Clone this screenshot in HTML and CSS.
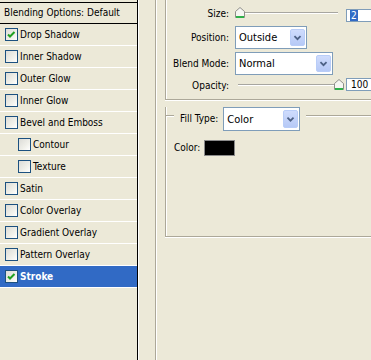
FILE: index.html
```html
<!DOCTYPE html>
<html>
<head>
<meta charset="utf-8">
<link rel="stylesheet" href="styles.css">
</head>
<body>
<div class="dialog">
  <div class="list">
    <div class="list-head">Blending Options: Default</div>
    <div class="item"><span class="cb"><svg width="11" height="11" viewBox="0 0 11 11"><path d="M2 5.5l2 2 4.5-4.5" stroke="#21a121" stroke-width="2" fill="none"/></svg></span><span>Drop Shadow</span></div>
    <div class="item"><span class="cb"></span><span>Inner Shadow</span></div>
    <div class="item"><span class="cb"></span><span>Outer Glow</span></div>
    <div class="item"><span class="cb"></span><span>Inner Glow</span></div>
    <div class="item"><span class="cb"></span><span>Bevel and Emboss</span></div>
    <div class="item sub"><span class="cb"></span><span>Contour</span></div>
    <div class="item sub"><span class="cb"></span><span>Texture</span></div>
    <div class="item"><span class="cb"></span><span>Satin</span></div>
    <div class="item"><span class="cb"></span><span>Color Overlay</span></div>
    <div class="item"><span class="cb"></span><span>Gradient Overlay</span></div>
    <div class="item"><span class="cb"></span><span>Pattern Overlay</span></div>
    <div class="item selected"><span class="cb"><svg width="11" height="11" viewBox="0 0 11 11"><path d="M2 5.5l2 2 4.5-4.5" stroke="#21a121" stroke-width="2" fill="none"/></svg></span><span>Stroke</span></div>
  </div>
  <div class="pane">
    <div class="frame">
      <div class="group structure">
        <div class="label">Size:</div>
        <div class="ctrl">
          <div class="slider s-size">
            <svg class="thumb" width="10" height="11" viewBox="0 0 10 11"><path d="M0.5 10.5V4.5L5 0.5L9.5 4.5V10.5Z" fill="#f6f6f2" stroke="#8f8f8a"/><path d="M1 9.5H9M1 10.5H9" stroke="#2fb04a"/></svg>
            <div class="track"></div>
          </div>
          <div class="num num-size"><span class="sel">2</span></div>
        </div>
        <div class="label">Position:</div>
        <div class="ctrl">
          <div class="select w-pos"><span class="val">Outside</span><span class="btn"><svg width="15" height="17" viewBox="0 0 15 17"><path d="M4 7l3.5 3.5L11 7" stroke="#4d6185" stroke-width="2" fill="none"/></svg></span></div>
        </div>
        <div class="label">Blend Mode:</div>
        <div class="ctrl">
          <div class="select w-blend"><span class="val">Normal</span><span class="btn"><svg width="15" height="17" viewBox="0 0 15 17"><path d="M4 7l3.5 3.5L11 7" stroke="#4d6185" stroke-width="2" fill="none"/></svg></span></div>
        </div>
        <div class="label">Opacity:</div>
        <div class="ctrl">
          <div class="slider s-opacity">
            <div class="track"></div>
            <svg class="thumb" width="10" height="11" viewBox="0 0 10 11"><path d="M0.5 10.5V4.5L5 0.5L9.5 4.5V10.5Z" fill="#f6f6f2" stroke="#8f8f8a"/><path d="M1 9.5H9M1 10.5H9" stroke="#2fb04a"/></svg>
          </div>
          <div class="num num-op">100</div>
        </div>
      </div>
      <div class="group fill">
        <div class="legend-row">
          <div class="seg seg-l"></div>
          <div class="legend">
            <span class="legend-label">Fill Type:</span>
            <div class="select w-fill"><span class="val">Color</span><span class="btn"><svg width="15" height="18" viewBox="0 0 15 18"><path d="M4 7.5l3.5 3.5L11 7.5" stroke="#4d6185" stroke-width="2" fill="none"/></svg></span></div>
          </div>
          <div class="seg seg-r"></div>
        </div>
        <div class="color-row">
          <span>Color:</span>
          <span class="swatch"></span>
        </div>
      </div>
    </div>
  </div>
</div>
</body>
</html>
```
FILE: styles.css
```css
* { box-sizing: border-box; }
html, body {
  margin: 0;
  padding: 0;
}
body {
  width: 371px;
  height: 360px;
  overflow: hidden;
  background: #ece9d8;
  color: #000;
  font-family: "DejaVu Sans Condensed", "DejaVu Sans", sans-serif;
  font-stretch: condensed;
  font-size: 10px;
  line-height: 1;
}
.dialog {
  display: flex;
  height: 360px;
  width: 371px;
}
.list {
  flex: none;
  width: 138px;
  padding-top: 2px;
  border-right: 1px solid #000;
  box-shadow: 1px 0 0 #fff;
}
.list-head {
  height: 22px;
  border-top: 1px solid #000;
  border-bottom: 1px solid #000;
  padding-left: 4px;
  display: flex;
  align-items: center;
}
.item {
  height: 22px;
  border-bottom: 1px solid #fff;
  display: flex;
  align-items: center;
  padding-left: 5px;
  gap: 2px;
}
.item.sub { padding-left: 18px; }
.item.selected {
  background: #316ac5;
  color: #fff;
  font-weight: bold;
}
.cb {
  flex: none;
  width: 13px;
  height: 13px;
  border: 1px solid #1c5180;
  background: linear-gradient(135deg, #dcdcd7 0%, #f0f0ea 60%, #ffffff 100%);
  display: flex;
}
.cb svg { display: block; }
.pane {
  flex: 1;
  padding-left: 17px;
  min-width: 0;
  overflow: hidden;
}
.frame {
  height: 360px;
  border-left: 1px solid #aca899;
  box-shadow: inset 1px 0 0 #fff;
  padding-left: 9px;
}
.group {
  border-left: 1px solid #aca899;
  border-bottom: 1px solid #aca899;
  box-shadow: inset 1px 0 0 #fff, 0 1px 0 #fff;
}
.structure {
  height: 100px;
  display: grid;
  grid-template-columns: 62px auto;
  grid-template-rows: 18px 23px 23px 16px;
  column-gap: 6px;
  row-gap: 3px;
  padding-top: 5px;
  padding-left: 1px;
  align-content: start;
}
.label {
  text-align: right;
  align-self: center;
  white-space: nowrap;
}
.ctrl {
  display: flex;
  align-items: flex-start;
  min-width: 0;
}
.slider {
  flex: none;
  width: 109px;
  display: flex;
  align-items: center;
}
.s-size { margin-top: 2px; }
.s-opacity { margin-top: 1px; }
.thumb { display: block; flex: none; }
.track {
  flex: 1;
  height: 2px;
  border-top: 1px solid #a7a6a0;
  border-bottom: 1px solid #fff;
  margin-top: 1px;
}
.s-size .track { margin-right: 6px; }
.s-opacity .track { margin-left: 3px; }
.num {
  flex: none;
  margin-left: 2px;
  width: 26px;
  height: 13px;
  border: 1px solid #7f9db9;
  border-right: 0;
  background: #fff;
  padding-left: 4px;
  display: flex;
  align-items: center;
}
.num-size { margin-top: 4px; }
.sel {
  background: #316ac5;
  color: #fff;
  padding: 0 1px;
  margin-left: -1px;
  line-height: 11px;
}
.select {
  flex: none;
  display: flex;
  height: 23px;
  border: 1px solid #7f9db9;
  background: #fff;
  padding: 2px 1px 2px 2px;
}
.w-pos { width: 72px; }
.w-blend { width: 98px; }
.w-fill { width: 77px; height: 24px; }
.select .val {
  flex: 1;
  display: flex;
  align-items: center;
  padding-left: 1px;
  font-size: 11px;
}
.select .btn {
  flex: none;
  width: 15px;
  border-radius: 2px;
  border: 1px solid #b9cdf8;
  background: linear-gradient(#cfdcfd, #b6c9f6);
  display: flex;
  align-items: center;
  justify-content: center;
}
.select .btn svg { display: block; }
.fill {
  margin-top: 15px;
  height: 130px;
}
.legend-row {
  display: flex;
  align-items: flex-start;
  margin-top: -8px;
  height: 24px;
}
.seg {
  height: 2px;
  margin-top: 8px;
  border-top: 1px solid #aca899;
  border-bottom: 1px solid #fff;
}
.seg-l { width: 8px; flex: none; }
.seg-r { flex: 1; }
.legend {
  display: flex;
  align-items: center;
  gap: 5px;
  padding: 0 6px;
  height: 24px;
}
.legend-label { white-space: nowrap; }
.color-row {
  display: flex;
  align-items: center;
  gap: 4px;
  margin-top: 9px;
  padding-left: 8px;
  height: 16px;
}
.swatch {
  width: 31px;
  height: 16px;
  background: #000;
  border: 1px solid #8a8a8a;
}
```
